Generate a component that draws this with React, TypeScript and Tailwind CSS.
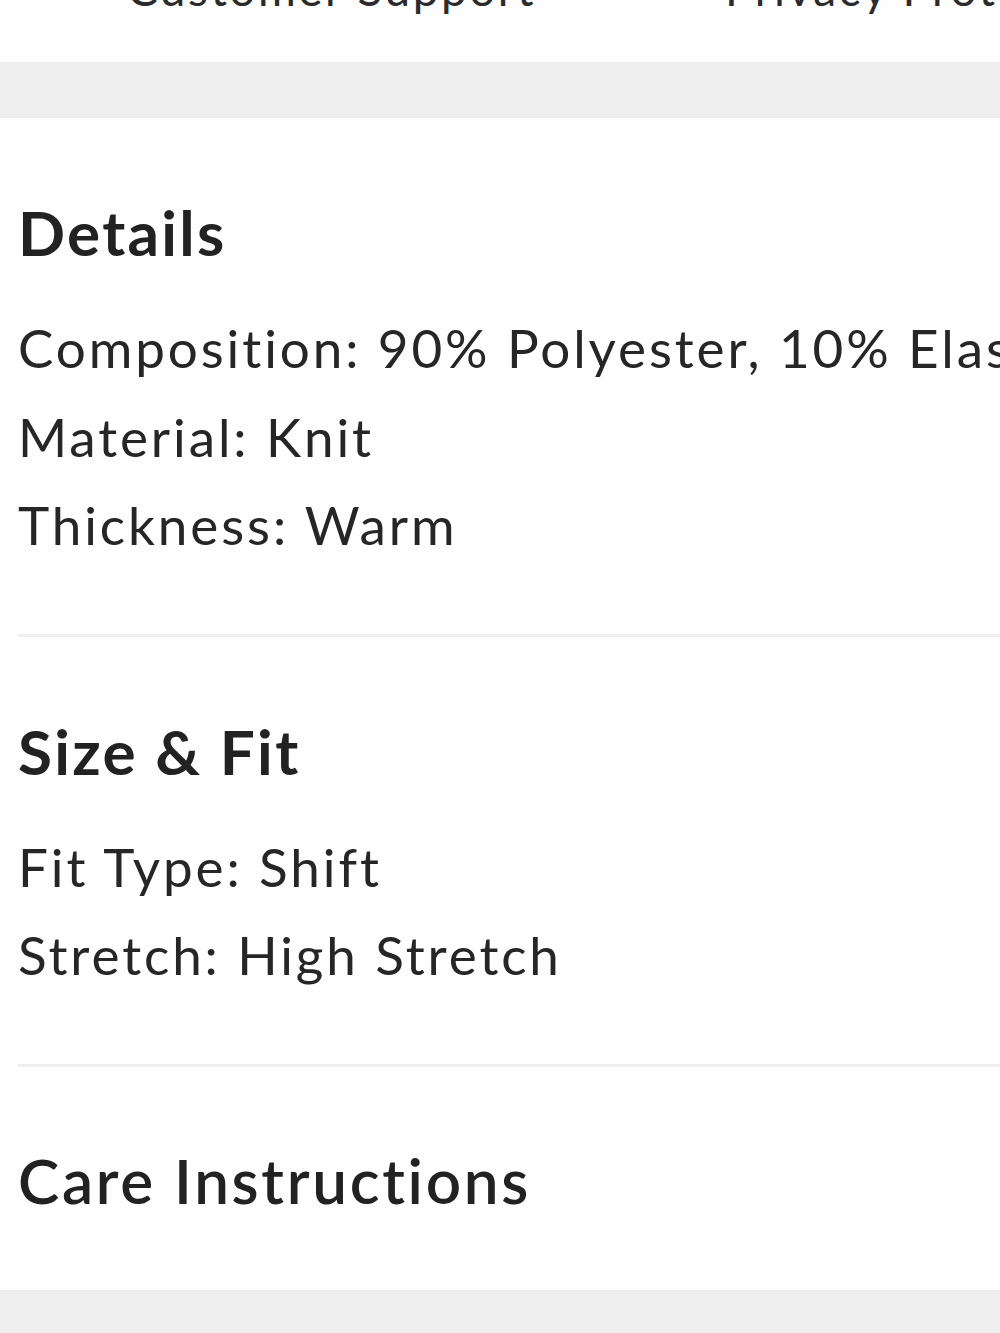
const sections = [
  {
    title: "Details",
    weight: "font-bold tracking-[2.3px]",
    lines: [
      "Composition: 90% Polyester, 10% Elastane",
      "Material: Knit",
      "Thickness: Warm",
    ],
  },
  {
    title: "Size & Fit",
    weight: "font-bold tracking-[2.3px]",
    lines: ["Fit Type: Shift", "Stretch: High Stretch"],
  },
  {
    title: "Care Instructions",
    weight: "font-semibold tracking-[2.7px]",
    lines: [],
  },
];

export default function App() {
  return (
    <div className="h-[1333px] w-full overflow-hidden bg-[#fefefe] font-['Lato','Noto_Sans',sans-serif] text-[#262626] [font-variant-ligatures:none]">
      {/* Footer links, cut off at the top */}
      <div className="flex h-[62px] overflow-hidden whitespace-nowrap text-[46px] leading-none tracking-[2.5px] text-[#2b2b2b]">
        <span className="-mt-[34px] w-[725px] shrink-0 pl-[127px]">
          Customer Support
        </span>
        <span className="-mt-[34px] shrink-0">Privacy Protection</span>
      </div>

      <div className="h-[56px] bg-[#eeeeee]" />

      {/* Product info */}
      <div className="pl-[18px]">
        {sections.map((section, i) => (
          <div
            key={section.title}
            className={
              i < sections.length - 1
                ? "border-b-[3px] border-[#eeeeee] pt-[83px] pb-[64px]"
                : "pt-[82px] pb-[79px]"
            }
          >
            <h3
              className={`whitespace-nowrap text-[62px] leading-none text-[#222222] ${section.weight}`}
            >
              {section.title}
            </h3>

            {section.lines.length > 0 && (
              <div className="mt-[41px]">
                {section.lines.map((line) => (
                  <p
                    key={line}
                    className="whitespace-nowrap text-[53px] leading-[88.5px] tracking-[2.9px]"
                  >
                    {line}
                  </p>
                ))}
              </div>
            )}
          </div>
        ))}
      </div>

      <div className="h-[60px] bg-[#eeeeee]" />
    </div>
  );
}
